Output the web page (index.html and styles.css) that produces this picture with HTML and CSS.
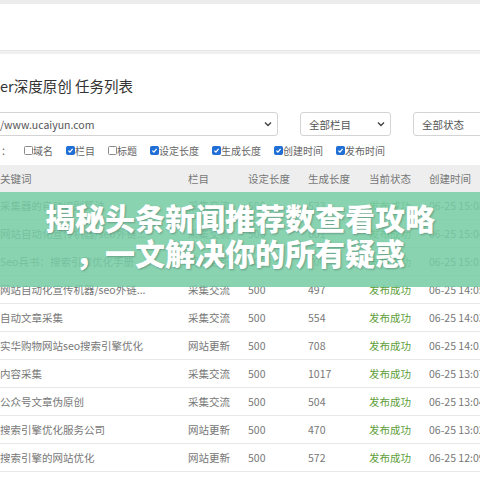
FILE: index.html
```html
<!DOCTYPE html>
<html lang="zh-CN">
<head>
<meta charset="utf-8">
<title>任务列表</title>
<link rel="stylesheet" href="styles.css">
</head>
<body>
<div class="screen">
  <div class="top-strip"></div>
  <div class="top-panel"></div>
  <div class="main">
    <h1 class="title">er深度原创 任务列表</h1>
    <div class="toolbar">
      <div class="select select-site"><span>/www.ucaiyun.com</span><svg class="chev" viewBox="0 0 8 6"><path d="M1 1.5 L4 4.5 L7 1.5"/></svg></div>
      <div class="select select-col"><span>全部栏目</span><svg class="chev" viewBox="0 0 8 6"><path d="M1 1.5 L4 4.5 L7 1.5"/></svg></div>
      <div class="select select-state"><span>全部状态</span></div>
    </div>
    <div class="checks">
      <span class="colon">：</span>
      <label class="check"><span class="box"></span>域名</label>
      <label class="check"><span class="box on"><svg viewBox="0 0 10 10"><path d="M2 5.2 L4.2 7.3 L8 2.8"/></svg></span>栏目</label>
      <label class="check"><span class="box"></span>标题</label>
      <label class="check"><span class="box on"><svg viewBox="0 0 10 10"><path d="M2 5.2 L4.2 7.3 L8 2.8"/></svg></span>设定长度</label>
      <label class="check"><span class="box on"><svg viewBox="0 0 10 10"><path d="M2 5.2 L4.2 7.3 L8 2.8"/></svg></span>生成长度</label>
      <label class="check"><span class="box on"><svg viewBox="0 0 10 10"><path d="M2 5.2 L4.2 7.3 L8 2.8"/></svg></span>创建时间</label>
      <label class="check"><span class="box on"><svg viewBox="0 0 10 10"><path d="M2 5.2 L4.2 7.3 L8 2.8"/></svg></span>发布时间</label>
    </div>
    <div class="table">
      <div class="row head">
        <div>关键词</div><div>栏目</div><div>设定长度</div><div>生成长度</div><div>当前状态</div><div>创建时间</div>
      </div>
      <div class="row"><div>采集器的自动识别算法</div><div>采集交流</div><div>500</div><div>533</div><div class="ok">发布成功</div><div>06-25 15:08</div></div>
      <div class="row"><div>网站自动化宣传机器/seo外链...</div><div>采集交流</div><div>500</div><div>601</div><div class="ok">发布成功</div><div>06-25 15:04</div></div>
      <div class="row"><div>Seo兵书：搜索引擎优化手册</div><div>网站更新</div><div>500</div><div>700</div><div class="ok">发布成功</div><div>06-25 15:01</div></div>
      <div class="row"><div>网站自动化宣传机器/seo外链...</div><div>采集交流</div><div>500</div><div>497</div><div class="ok">发布成功</div><div>06-25 14:05</div></div>
      <div class="row"><div>自动文章采集</div><div>采集交流</div><div>500</div><div>554</div><div class="ok">发布成功</div><div>06-25 14:03</div></div>
      <div class="row"><div>实华购物网站seo搜索引擎优化</div><div>网站更新</div><div>500</div><div>708</div><div class="ok">发布成功</div><div>06-25 14:01</div></div>
      <div class="row"><div>内容采集</div><div>采集交流</div><div>500</div><div>1017</div><div class="ok">发布成功</div><div>06-25 13:07</div></div>
      <div class="row"><div>公众号文章伪原创</div><div>采集交流</div><div>500</div><div>504</div><div class="ok">发布成功</div><div>06-25 13:04</div></div>
      <div class="row"><div>搜索引擎优化服务公司</div><div>网站更新</div><div>500</div><div>470</div><div class="ok">发布成功</div><div>06-25 13:02</div></div>
      <div class="row"><div>搜索引擎的网站优化</div><div>网站更新</div><div>500</div><div>572</div><div class="ok">发布成功</div><div>06-25 12:09</div></div>
      <div class="row"><div></div><div></div><div></div><div></div><div></div><div></div></div>
    </div>
  </div>
  <div class="banner">
    <span class="line">揭秘头条新闻推荐数查看攻略</span>
    <span class="line">，一文解决你的所有疑惑</span>
  </div>
</div>
</body>
</html>
```

FILE: styles.css
```css
html, body {
  margin: 0;
  padding: 0;
  background: #f0f0f0;
}
body {
  font-family: "Noto Sans CJK SC", "Noto Sans", "Liberation Sans", sans-serif;
  color: #666;
}
.screen {
  position: relative;
  width: 480px;
  height: 480px;
  overflow: hidden;
  background: #f0f0f0;
}
.top-strip {
  height: 4px;
  background: #ececec;
}
.top-panel {
  height: 46px;
  background: #fff;
  border-bottom: 1px solid #e6e6e6;
}
.main {
  margin-top: 3px;
  background: #fff;
  height: 430px;
  padding-top: 22px;
  box-sizing: border-box;
}
.title {
  margin: 0;
  font-size: 14.5px;
  line-height: 20px;
  font-weight: 400;
  color: #333;
  white-space: nowrap;
}
.toolbar {
  display: flex;
  gap: 22px;
  margin-top: 16px;
  height: 24px;
}
.select {
  height: 24px;
  box-sizing: border-box;
  border: 1px solid #d4d4d4;
  border-radius: 3px;
  background: #fff;
  display: flex;
  align-items: center;
  justify-content: space-between;
  padding: 0 5px 0 8px;
  font-size: 10.5px;
  color: #555;
  white-space: nowrap;
  flex: none;
}
.select-site {
  width: 290px;
  margin-left: -12px;
  padding-left: 11px;
}
.select-col {
  width: 91px;
}
.select-state {
  width: 90px;
}
.chev {
  width: 8px;
  height: 6px;
  fill: none;
  stroke: #444;
  stroke-width: 1.4;
}
.checks {
  display: flex;
  align-items: center;
  height: 29px;
  font-size: 10px;
  color: #666;
  white-space: nowrap;
}
.colon {
  width: 23px;
  flex: none;
  padding-left: 1px;
}
.check {
  display: flex;
  align-items: center;
  margin-right: 13px;
}
.box {
  width: 9px;
  height: 9px;
  box-sizing: border-box;
  border: 1px solid #8a8a8a;
  border-radius: 1.5px;
  background: #fff;
  margin-right: 0;
  display: inline-flex;
}
.box.on {
  background: #1f6fd6;
  border-color: #1f6fd6;
}
.box svg {
  width: 100%;
  height: 100%;
  fill: none;
  stroke: #fff;
  stroke-width: 1.8;
}
.table {
  margin-left: -8px;
  font-size: 10.5px;
}
.row {
  display: grid;
  grid-template-columns: 188px 60px 60px 61px 60px 120px;
  height: 28px;
  box-sizing: border-box;
  border-bottom: 1px solid #e8e8e8;
  align-items: center;
  color: #777;
}
.row > div {
  padding-left: 8px;
  white-space: nowrap;
  overflow: hidden;
}
.row.head {
  height: 27px;
  background: #eeeeee;
  border-bottom: none;
}
.ok {
  color: #5c9e38;
}
.banner {
  position: absolute;
  left: 0;
  top: 192px;
  width: 480px;
  height: 95px;
  box-sizing: border-box;
  padding-top: 8px;
  background: rgba(118, 204, 164, 0.86);
  text-align: center;
  font-family: "Noto Sans CJK SC", "Noto Sans", sans-serif;
  font-weight: 900;
  font-size: 30px;
  line-height: 35px;
  color: #fff;
  text-shadow: 1px 1px 2px rgba(0, 0, 0, 0.25);
}
.line {
  display: block;
  white-space: nowrap;
}
```
